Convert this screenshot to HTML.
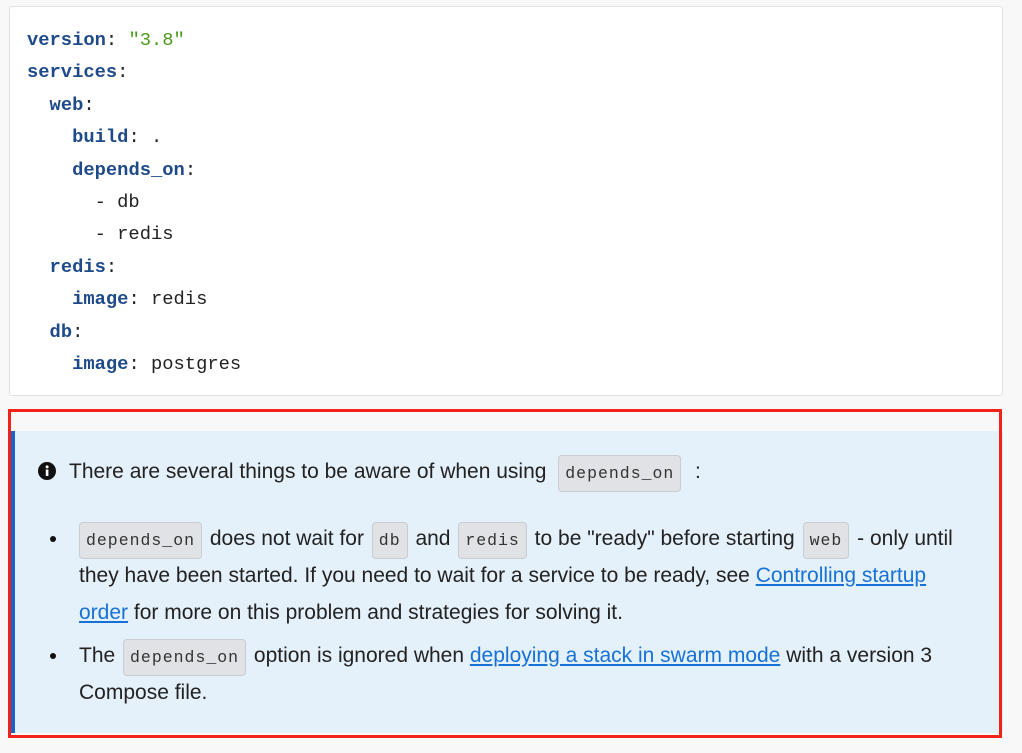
<!DOCTYPE html>
<html><head><meta charset="utf-8"><style>
body{margin:0;background:#f8f8f8;width:1022px;height:753px;overflow:hidden;position:relative;font-family:"Liberation Sans",Roboto,sans-serif;}
.code{position:absolute;left:9px;top:6px;width:992px;height:388px;background:#fff;border:1px solid #e1e1e3;border-radius:3px;}
.code pre{margin:0;position:absolute;left:17px;top:17px;font-family:"Liberation Mono",monospace;font-size:18.8px;line-height:32.4px;color:#222;}
.k{color:#1f4a8a;font-weight:bold}
.s{color:#4c9a1c}
.red{position:absolute;left:8px;top:409px;width:988px;height:323px;border:3px solid #f0221a;}
.blue{position:absolute;left:10px;top:431px;width:988px;height:302px;background:#e4f0fa;border-left:5px solid #1a62c7;}
.t{position:absolute;font-size:21px;color:#222;white-space:nowrap;line-height:37px;}
code{font-family:"Liberation Mono",monospace;font-size:16.5px;letter-spacing:1px;background:#e1e2e5;border:1px solid #c9cdd2;border-radius:4px;padding:8px 6px;margin:0 2px;color:#333;}
a{color:#1672d6;text-decoration:underline;}
.dot{position:absolute;width:6px;height:6px;border-radius:50%;background:#111;}
</style></head><body>
<div class="code"><pre><span class="k">version</span>: <span class="s">"3.8"</span>
<span class="k">services</span>:
  <span class="k">web</span>:
    <span class="k">build</span>: .
    <span class="k">depends_on</span>:
      - db
      - redis
  <span class="k">redis</span>:
    <span class="k">image</span>: redis
  <span class="k">db</span>:
    <span class="k">image</span>: postgres</pre></div>
<div class="blue"></div>
<div class="red"></div>
<svg style="position:absolute;left:38px;top:462px" width="18" height="18" viewBox="0 0 18 18"><circle cx="9" cy="9" r="9" fill="#111"/><rect x="7.8" y="7.5" width="2.6" height="6.5" fill="#fff"/><circle cx="9.1" cy="4.9" r="1.5" fill="#fff"/></svg>
<div class="t" style="left:69px;top:453px">There are several things to be aware of when using <code style="margin-left:6px">depends_on</code> &nbsp;:</div>
<div class="dot" style="left:50px;top:536px"></div>
<div class="t" style="left:79px;top:520px"><code style="margin-left:0">depends_on</code> does not wait for <code>db</code> and <code>redis</code> to be "ready" before starting <code>web</code> - only until</div>
<div class="t" style="left:79px;top:557px">they have been started. If you need to wait for a service to be ready, see <a>Controlling startup</a></div>
<div class="t" style="left:79px;top:594px"><a>order</a> for more on this problem and strategies for solving it.</div>
<div class="dot" style="left:50px;top:653px"></div>
<div class="t" style="left:79px;top:637px">The <code>depends_on</code> option is ignored when <a>deploying a stack in swarm mode</a> with a version 3</div>
<div class="t" style="left:79px;top:674px">Compose file.</div>
</body></html>
